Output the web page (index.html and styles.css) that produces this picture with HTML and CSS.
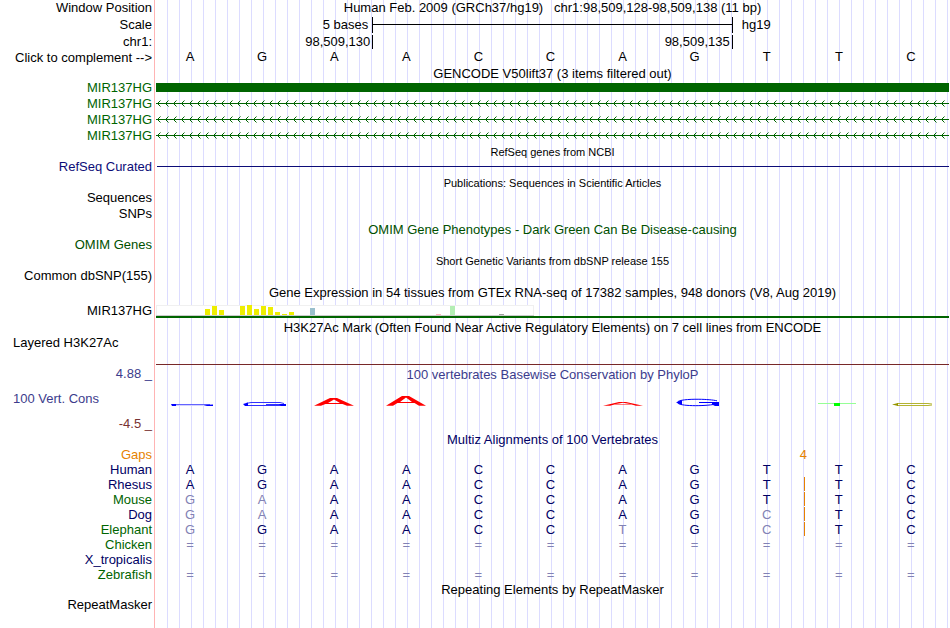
FILE: index.html
```
<!DOCTYPE html>
<html lang="en">
<head>
<meta charset="utf-8">
<title>Human chr1:98,509,128-98,509,138</title>
<link rel="stylesheet" href="styles.css">
</head>
<body>
<svg class="defs" width="0" height="0" aria-hidden="true">
  <defs>
    <pattern id="intron" width="8" height="16" patternUnits="userSpaceOnUse" x="1">
      <path d="M3.5 4.5L.5 7.5L3.5 10.5" fill="none" stroke="#006400"/>
      <path d="M0 7.5H8" stroke="#006400"/>
    </pattern>
  </defs>
</svg>
<main class="browser">
  <div class="row"><span class="label">Window Position</span><h1 class="title">Human Feb. 2009 (GRCh37/hg19) &nbsp; chr1:98,509,128-98,509,138 (11 bp)</h1></div>
  <div class="row tall"><span class="label">Scale</span>
    <div class="ruler scale"><span class="unit">5 bases</span><span class="span"></span><span class="assembly">hg19</span></div>
  </div>
  <div class="row"><span class="label">chr1:</span>
    <div class="ruler coords"><span class="pos">98,509,130</span><span class="pos ticks">98,509,135</span></div>
  </div>
  <div class="row sequence"><button class="label" type="button">Click to complement --&gt;</button>
    <div class="bases"><span>A</span><span>G</span><span>A</span><span>A</span><span>C</span><span>C</span><span>A</span><span>G</span><span>T</span><span>T</span><span>C</span></div>
  </div>

  <div class="row short"><h2 class="title">GENCODE V50lift37 (3 items filtered out)</h2></div>
  <div class="row green"><span class="label">MIR137HG</span><div class="exon"></div></div>
  <div class="row green"><span class="label">MIR137HG</span><svg class="intron" aria-hidden="true"><rect width="100%" height="16" fill="url(#intron)"/></svg></div>
  <div class="row green"><span class="label">MIR137HG</span><svg class="intron" aria-hidden="true"><rect width="100%" height="16" fill="url(#intron)"/></svg></div>
  <div class="row green"><span class="label">MIR137HG</span><svg class="intron" aria-hidden="true"><rect width="100%" height="16" fill="url(#intron)"/></svg></div>

  <div class="row"><h2 class="title small">RefSeq genes from NCBI</h2></div>
  <div class="row line refseq"><span class="label">RefSeq Curated</span><div class="feature"></div></div>

  <div class="row"><h2 class="title small">Publications: Sequences in Scientific Articles</h2></div>
  <div class="row line"><span class="label">Sequences</span></div>
  <div class="row"><span class="label">SNPs</span></div>

  <div class="row omim"><h2 class="title">OMIM Gene Phenotypes - Dark Green Can Be Disease-causing</h2></div>
  <div class="row line omim"><span class="label">OMIM Genes</span></div>

  <div class="row"><h2 class="title small">Short Genetic Variants from dbSNP release 155</h2></div>
  <div class="row line"><span class="label">Common dbSNP(155)</span></div>

  <div class="row mid"><h2 class="title">Gene Expression in 54 tissues from GTEx RNA-seq of 17382 samples, 948 donors (V8, Aug 2019)</h2></div>
  <div class="row gtex"><span class="label">MIR137HG</span>
    <div class="expression">
      <svg width="378" height="11" shape-rendering="crispEdges" role="img" aria-label="Tissue expression">
        <rect width="378" height="11" fill="#f0f0f0"/><rect x="1" y="1" width="376" height="9" fill="#fff"/>
        <path d="M0 10.5H378" stroke="#ccc"/>
        <path fill="#eeee00" d="M49 4h5v6h-5zM56 1h5v9h-5zM63 5h5v5h-5zM84 1h5v9h-5zM91 0h5v10h-5zM98 4h5v6h-5zM105 1h5v9h-5zM112 2h5v8h-5zM119 7h5v3h-5zM126 9h5v1h-5zM133 7h5v3h-5z"/>
        <path fill="#9ac0cd" d="M154 3h5v7h-5z"/>
        <path fill="#ffb6c1" d="M280 9h5v1h-5z"/>
        <path fill="#b4eeb4" d="M294 1h5v9h-5z"/>
        <path fill="#a0a0a0" d="M343 9h5v1h-5z"/>
      </svg>
    </div>
  </div>

  <div class="row"><h2 class="title">H3K27Ac Mark (Often Found Near Active Regulatory Elements) on 7 cell lines from ENCODE</h2></div>
  <div class="row h3k"><span class="label start">Layered H3K27Ac</span><div class="baseline"></div></div>

  <div class="row phylo">
    <div class="axis"><span class="label">4.88 _</span><span class="label start">100 Vert. Cons</span><span class="label low">-4.5 _</span></div>
    <div class="plot">
      <h2 class="title">100 vertebrates Basewise Conservation by PhyloP</h2>
      <div class="bases logos" role="img" aria-label="Conservation logo">
        <svg viewBox="0 0 52 50"><path d="M8 22.500H46" stroke="#6464ff"/><path d="M7 22h5v2H8zM39 23l10-.500v1.500h-6z" fill="#00f"/><path d="M12 23.500H40" stroke="#d2d2ff"/></svg>
        <svg viewBox="0 0 52 50"><path d="M48 21.500L44 20.500H15L10 21.500M10 23.500H46M30 22.500H46" fill="none" stroke="#3232ff"/><path d="M7 22l5-1.500v3.500H9zM43 22h7v2h-5z" fill="#00f"/></svg>
        <svg viewBox="0 0 52 50"><path d="M6 23.700L22 16h7l17 7.700h-7L34.500 22h-17L13 23.700zM20 21h12l-6-3.500z" fill="#f00" fill-rule="evenodd"/></svg>
        <svg viewBox="0 0 52 50"><path d="M6 23.700L22 14h7l17 9.700h-7L34.500 21h-17L13 23.700zM20 20h12l-6-4.500z" fill="#f00" fill-rule="evenodd"/></svg>
        <svg viewBox="0 0 52 50"></svg>
        <svg viewBox="0 0 52 50"></svg>
        <svg viewBox="0 0 52 50"><path d="M6 23.700L22 20h7l17 3.700h-7L34.500 22.500h-17L13 23.700zM19 22h14l-7-1.200z" fill="#f00" fill-rule="evenodd"/></svg>
        <svg viewBox="0 0 52 50"><path d="M48 18.800C38 16.500 8 16.500 8.500 20.500C9 24.500 36 24.300 46 22.200M30 20.500H46" fill="none" stroke="#00f"/><path d="M7 20.500L13 18v5zM43 20h7v4h-4l-3-1.500z" fill="#00f"/></svg>
        <svg viewBox="0 0 52 50"></svg>
        <svg viewBox="0 0 52 50" shape-rendering="crispEdges"><path d="M5 21.500H43" stroke="#96ff96"/><path d="M21 21h6v3h-6z" fill="#0f0"/></svg>
        <svg viewBox="0 0 52 50"><path d="M47 22L43 21.500H12M12 23.500H43L47 23" fill="none" stroke="#b4b432"/><path d="M7 22.500l6-1.500v3z" fill="#969600"/></svg>
      </div>
    </div>
  </div>

  <div class="row line multiz"><h2 class="title">Multiz Alignments of 100 Vertebrates</h2></div>
  <table class="alignment">
    <tbody>
      <tr class="gaps"><th scope="row">Gaps</th><td></td><td></td><td></td><td></td><td></td><td></td><td></td><td></td><td></td><td class="gap"><span>4</span></td><td></td></tr>
      <tr><th scope="row">Human</th><td>A</td><td>G</td><td>A</td><td>A</td><td>C</td><td>C</td><td>A</td><td>G</td><td>T</td><td>T</td><td>C</td></tr>
      <tr><th scope="row">Rhesus</th><td>A</td><td>G</td><td>A</td><td>A</td><td>C</td><td>C</td><td>A</td><td>G</td><td>T</td><td class="insert">T</td><td>C</td></tr>
      <tr class="alt"><th scope="row">Mouse</th><td class="diff">G</td><td class="diff">A</td><td>A</td><td>A</td><td>C</td><td>C</td><td>A</td><td>G</td><td>T</td><td class="insert">T</td><td>C</td></tr>
      <tr><th scope="row">Dog</th><td class="diff">G</td><td class="diff">A</td><td>A</td><td>A</td><td>C</td><td>C</td><td>A</td><td>G</td><td class="diff">C</td><td class="insert">T</td><td>C</td></tr>
      <tr class="alt"><th scope="row">Elephant</th><td class="diff">G</td><td>G</td><td>A</td><td>A</td><td>C</td><td>C</td><td class="diff">T</td><td>G</td><td class="diff">C</td><td class="insert">T</td><td>C</td></tr>
      <tr class="alt missing"><th scope="row">Chicken</th><td>=</td><td>=</td><td>=</td><td>=</td><td>=</td><td>=</td><td>=</td><td>=</td><td>=</td><td>=</td><td>=</td></tr>
      <tr><th scope="row">X_tropicalis</th><td></td><td></td><td></td><td></td><td></td><td></td><td></td><td></td><td></td><td></td><td></td></tr>
      <tr class="alt missing"><th scope="row">Zebrafish</th><td>=</td><td>=</td><td>=</td><td>=</td><td>=</td><td>=</td><td>=</td><td>=</td><td>=</td><td>=</td><td>=</td></tr>
    </tbody>
  </table>

  <div class="row"><h2 class="title">Repeating Elements by RepeatMasker</h2></div>
  <div class="row line"><span class="label">RepeatMasker</span></div>
</main>
</body>
</html>
```
FILE: styles.css
```
* { box-sizing: border-box; }

body {
  margin: 0;
  font: 13px/15px "Liberation Sans", Arial, sans-serif;
  color: #000;
  background: #fff;
}

.defs { position: absolute; }

/* Guide lines every 12px to the right of the label column */
.browser {
  min-height: 100vh;
  padding-right: 1px;
  background:
    linear-gradient(#ffb4b4, #ffb4b4) 154px 0 / 1px 100% no-repeat,
    linear-gradient(#fff, #fff) 0 0 / 156px 100% no-repeat,
    linear-gradient(90deg, #dcdcff 1px, transparent 1px) 11px 0 / 12px 100%;
}

.row {
  display: grid;
  grid-template-columns: 152px minmax(0, 1fr);
  column-gap: 4px;
  height: 16px;
  line-height: 16px;
}
.row.tall { height: 18px; line-height: 18px; }
.row.short { height: 14px; line-height: 16px; }
.row.sequence { line-height: 14px; }
.row.line { height: 15px; line-height: 14px; }
.row.mid { height: 17px; line-height: 17px; }

.label {
  grid-column: 1;
  margin: 0;
  padding: 0;
  border: 0;
  background: none;
  font: inherit;
  color: inherit;
  text-align: right;
  white-space: nowrap;
}
.label.start { padding-left: 13px; text-align: left; }
button.label { cursor: pointer; }

.title {
  grid-column: 2;
  margin: 0;
  font-size: 13px;
  font-weight: normal;
  text-align: center;
  white-space: nowrap;
}
.title.small { font-size: 11px; }

.ruler {
  display: grid;
  grid-template-columns: 3fr 5fr 3fr;
}
.unit { padding-right: 4px; text-align: right; }
.span {
  margin: 1px 0;
  border: solid #000;
  border-width: 0 1px;
  background: linear-gradient(#000, #000) 0 7px / 100% 1px no-repeat;
}
.assembly { padding-left: 9px; }
.pos { padding-right: 2px; text-align: right; }
.ticks {
  margin: 1px 0;
  line-height: 14px;
  border: solid #000;
  border-width: 0 1px;
}

.bases {
  display: grid;
  grid-template-columns: repeat(11, minmax(0, 1fr));
  margin: 0 2px 0 -2px;
  text-align: center;
}

.green { color: #006400; }
.exon { margin: 3px 0 4px; background: #006400; }
.intron { display: block; width: 100%; height: 16px; }

.refseq { color: #0c0c78; }
.feature { height: 1px; margin: 6px 0 0 1px; background: #0c0c78; }

.omim { color: #005000; }

.row.gtex { height: 19px; line-height: 19px; }
.expression {
  align-self: start;
  display: flex;
  margin-top: 4px;
  border-bottom: 2px solid #006400;
}

.row.h3k { height: 32px; line-height: 14px; }
.baseline { height: 1px; margin-top: 28px; background: #782828; }

.row.phylo { height: 64px; line-height: 13px; color: #3c3c8c; }
.axis {
  display: flex;
  flex-direction: column;
  justify-content: space-between;
  padding-bottom: 2px;
}
.axis .label { line-height: 12px; }
.label.low { color: #783232; }
.plot .title { height: 14px; }
.logos svg { width: 52px; height: 50px; justify-self: center; }

.row.multiz { line-height: 16px; color: #000064; }

.alignment {
  width: calc(100% - 2px);
  table-layout: fixed;
  border-collapse: collapse;
  line-height: 15px;
  color: #000064;
}
.alignment th {
  width: 154px;
  padding: 0 2px 0 0;
  font-weight: normal;
  text-align: right;
}
.alignment td { position: relative; height: 15px; padding: 0; text-align: center; }
.alignment .alt th { color: #006400; }
.alignment .gaps { color: #e68200; }
.alignment .diff, .alignment .missing td { color: #8282b4; }
.gap span { position: absolute; top: 0; left: -3px; }
.insert::before {
  content: "";
  position: absolute;
  top: 0;
  left: 1px;
  width: 1px;
  height: 14px;
  background: #e68200;
}
```
